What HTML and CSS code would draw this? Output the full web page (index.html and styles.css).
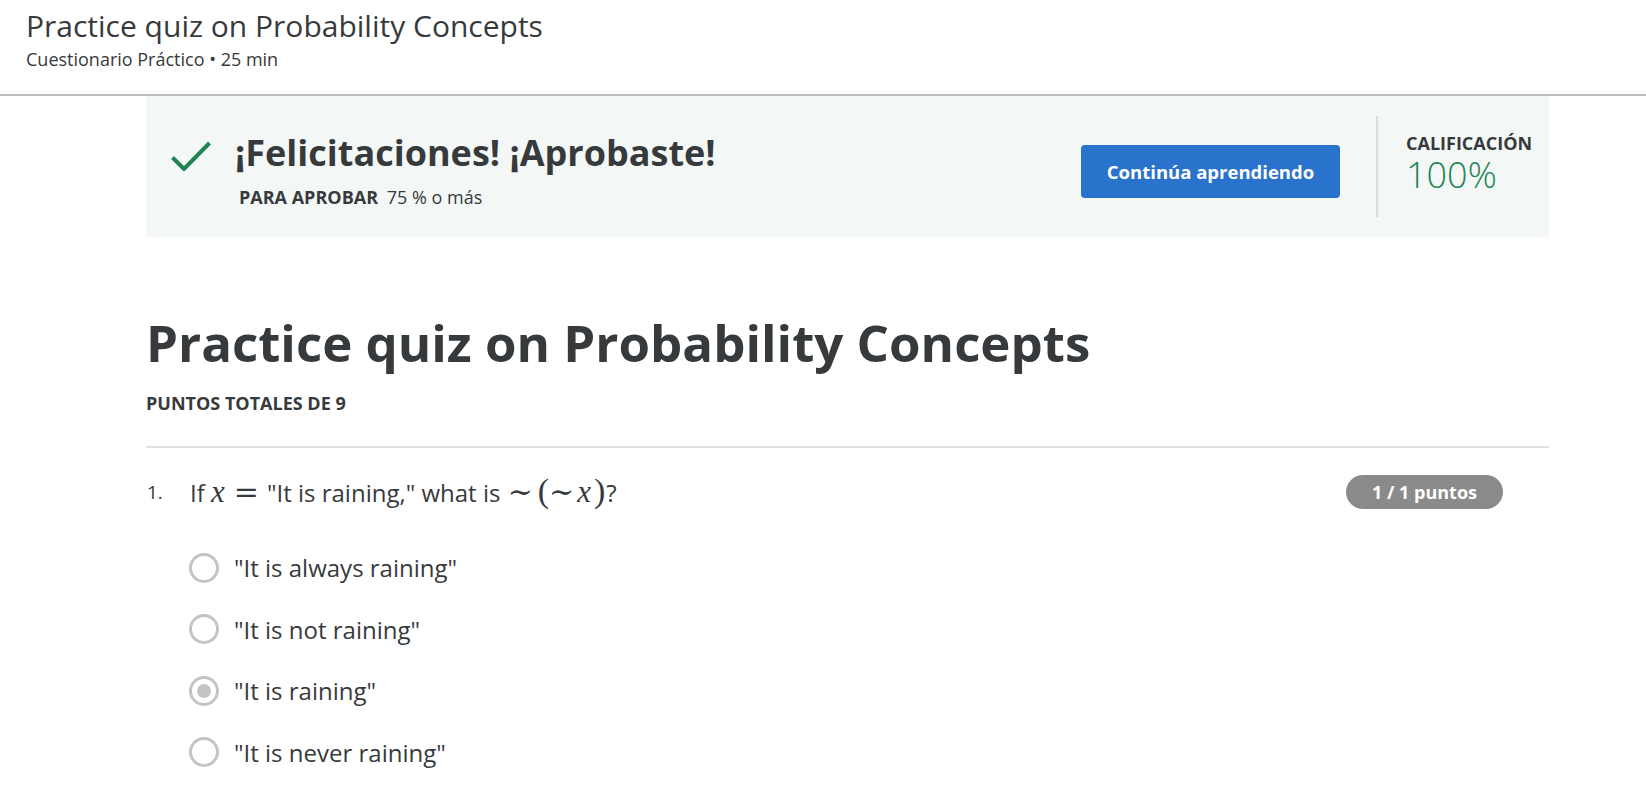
FILE: index.html
```html
<!DOCTYPE html>
<html lang="es">
<head>
<meta charset="utf-8">
<title>Practice quiz on Probability Concepts</title>
<link rel="stylesheet" href="styles.css">
</head>
<body>
<header class="top">
  <h1 class="top-title">Practice quiz on Probability Concepts</h1>
  <div class="top-sub">Cuestionario Práctico • 25 min</div>
</header>
<main class="main">
  <section class="banner">
    <div class="banner-left">
      <svg class="check" viewBox="0 0 40 30" width="40" height="30" aria-hidden="true">
        <path d="M1.5 16.5 L13 28 L38.5 2" fill="none" stroke="#1f8354" stroke-width="4"/>
      </svg>
      <div class="banner-text">
        <h2 class="congrats">¡Felicitaciones! ¡Aprobaste!</h2>
        <div class="pass"><span class="pass-label">PARA APROBAR</span> <span class="pass-val">75 % o más</span></div>
      </div>
    </div>
    <button class="btn">Continúa aprendiendo</button>
    <div class="vdiv"></div>
    <div class="grade">
      <div class="grade-label">CALIFICACIÓN</div>
      <div class="grade-val">100%</div>
    </div>
  </section>

  <h1 class="quiz-title">Practice quiz on Probability Concepts</h1>
  <div class="points-total">PUNTOS TOTALES DE 9</div>
  <hr class="rule">

  <div class="question">
    <span class="qnum">1.</span>
    <span class="qtext">If <span class="mi">x</span><span class="mo rel">=</span>"It is raining," what is <span class="mo tl">∼</span><span class="paren">(</span><span class="mo tl2">∼</span><span class="mi mi2">x</span><span class="paren pr">)</span>?</span>
    <span class="badge">1 / 1 puntos</span>
  </div>

  <ul class="options">
    <li class="opt"><span class="radio"></span><span class="opt-text">"It is always raining"</span></li>
    <li class="opt"><span class="radio"></span><span class="opt-text">"It is not raining"</span></li>
    <li class="opt"><span class="radio checked"></span><span class="opt-text">"It is raining"</span></li>
    <li class="opt"><span class="radio"></span><span class="opt-text">"It is never raining"</span></li>
  </ul>
</main>
</body>
</html>
```
FILE: styles.css
```css
* { box-sizing: border-box; }
html, body { margin: 0; padding: 0; background: #fff; }
body {
  font-family: "Open Sans", "Noto Sans", sans-serif;
  color: #373a3c;
  overflow: hidden;
}
.top {
  height: 96px;
  padding: 7px 0 0 26px;
  border-bottom: 2px solid #bdbdbd;
}
.top-title {
  margin: 0;
  font-size: 30px;
  font-weight: 400;
  line-height: 38px;
  color: #373a3c;
}
.top-sub {
  font-size: 18px;
  line-height: 24px;
  margin-top: 2px;
  color: #373a3c;
}
.main {
  margin-left: 146px;
  width: 1403px;
}
.banner {
  height: 141px;
  background: #f3f8f6;
  display: flex;
  align-items: center;
  padding: 0 18px 0 25px;
}
.banner-left {
  display: flex;
  align-items: flex-start;
  flex: 1;
  margin-top: 6px;
}
.check { margin-top: 11px; margin-right: 24px; flex: none; }
.congrats {
  margin: 0;
  font-size: 36px;
  font-weight: 700;
  line-height: 46px;
  color: #373a3c;
}
.pass { font-size: 18px; line-height: 24px; margin-top: 9px; margin-left: 4px; }
.pass-label { font-weight: 700; margin-right: 4px; }
.btn {
  width: 259px;
  height: 53px;
  background: #2a73cc;
  border: 0;
  border-radius: 4px;
  color: #fff;
  font-family: "Open Sans", sans-serif;
  font-size: 18.5px;
  font-weight: 700;
  margin-top: 9px;
}
.vdiv {
  width: 2px;
  height: 101px;
  background: #dcdcdc;
  margin: 0 28px 0 36px;
}
.grade { width: 125px; margin-top: -7px; }
.grade-label { font-size: 18px; font-weight: 700; line-height: 24px; }
.grade-val { font-size: 36px; font-weight: 300; color: #1f8354; line-height: 40px; }

.quiz-title {
  margin: 71px 0 0;
  font-size: 51px;
  font-weight: 700;
  line-height: 68px;
  color: #373a3c;
}
.points-total {
  margin-top: 15px;
  font-size: 18px;
  font-weight: 700;
  line-height: 24px;
}
.rule {
  border: 0;
  height: 2px;
  background: #e1e1e1;
  margin: 31px 0 0;
}
.question {
  display: flex;
  align-items: center;
  margin-top: 27px;
  height: 34px;
  padding-right: 46px;
}
.qnum { width: 44px; font-size: 19px; padding-left: 1px; }
.qtext { flex: 1; font-size: 24px; white-space: nowrap; line-height: 34px; }
.mi { font-family: "Liberation Serif", "DejaVu Serif", serif; font-style: italic; font-size: 31px; }
.mi2 { margin-right: 3px; }
.mo { font-family: "DejaVu Serif", "Liberation Serif", serif; font-size: 30px; }
.rel { margin: 0 8px 0 9px; }
.tl { margin: 0 5px 0 1px; }
.tl2 { margin: 0 3px 0 0; }
.paren { font-family: "Liberation Serif", "DejaVu Serif", serif; font-size: 34px; }
.pr { margin-right: 1px; }
.badge {
  width: 157px;
  height: 34px;
  border-radius: 17px;
  background: #8a8a8a;
  color: #fff;
  font-weight: 700;
  font-size: 18px;
  display: flex;
  align-items: center;
  justify-content: center;
}
.options {
  list-style: none;
  margin: 43px 0 0;
  padding: 0 0 0 43px;
  display: flex;
  flex-direction: column;
  gap: 30.6px;
}
.opt { display: flex; align-items: center; height: 31px; }
.radio {
  width: 30px;
  height: 30px;
  border: 3px solid #c4c4c4;
  border-radius: 50%;
  margin-right: 15px;
  display: flex;
  align-items: center;
  justify-content: center;
  flex: none;
}
.radio.checked::after {
  content: "";
  width: 14px;
  height: 14px;
  border-radius: 50%;
  background: #c4c4c4;
}
.opt-text { font-size: 24px; }
```
